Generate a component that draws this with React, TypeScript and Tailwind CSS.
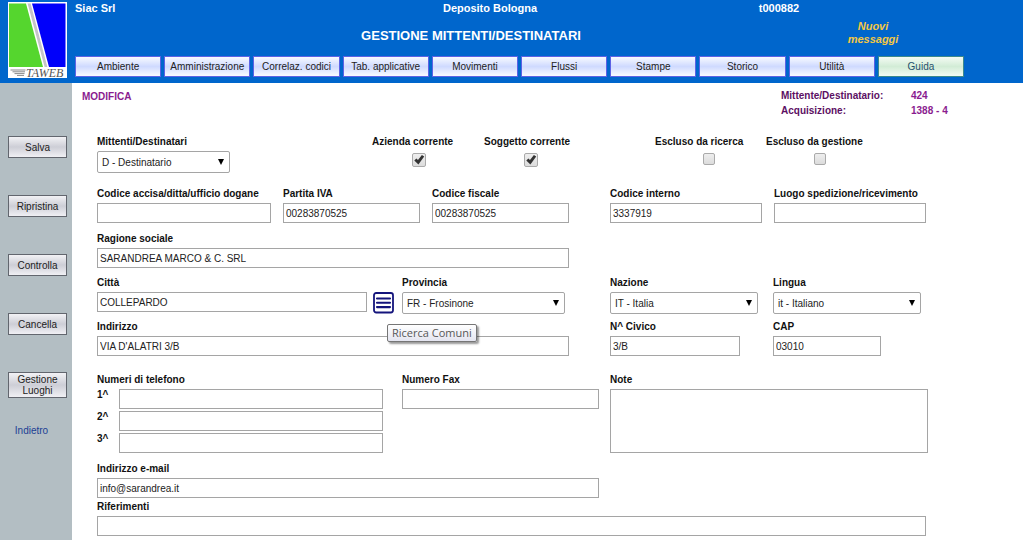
import { useId, type ReactNode } from "react";
import clsx from "clsx";

const menu = [
  "Ambiente",
  "Amministrazione",
  "Correlaz. codici",
  "Tab. applicative",
  "Movimenti",
  "Flussi",
  "Stampe",
  "Storico",
  "Utilità",
  "Guida",
];

const actions = ["Salva", "Ripristina", "Controlla", "Cancella", "Gestione Luoghi"];

const inputClass =
  "block h-5 w-full border border-[#a5a5a5] bg-white px-0.5 text-[10px] text-[#222] outline-none";
const labelClass = "block whitespace-nowrap text-[10px] leading-[18px] font-bold text-[#111]";

function Logo() {
  return (
    <svg viewBox="0 0 59 76" className="mt-0.5 h-[76px] w-[59px] shrink-0" role="img" aria-label="Taweb">
      <rect width="59" height="76" fill="#fff" />
      <path d="M1 1.5H18L35 65H1Z" fill="#55d62e" />
      <path d="M24 1.5H57.5V65H41Z" fill="#0000fa" />
      <path d="M19.6 1.5H22.6L39.4 65H36.6Z" fill="#c4c4c8" />
      <path
        d="M2.5 68H17.5M4.5 69.8H17M6.5 71.6H16.5M9 73.4H16"
        stroke="#8a8a8a"
        strokeWidth="1"
        fill="none"
      />
      <text
        x="18"
        y="74.5"
        fontSize="12"
        fontStyle="italic"
        fontFamily="Liberation Serif, serif"
        fill="#555"
      >
        TAWEB
      </text>
    </svg>
  );
}

function TextField({ label, value = "", after }: { label: string; value?: string; after?: ReactNode }) {
  const id = useId();
  return (
    <div className="min-w-0">
      <label htmlFor={id} className={labelClass}>
        {label}
      </label>
      <div className="flex">
        <input id={id} type="text" defaultValue={value} className={inputClass} />
        {after}
      </div>
    </div>
  );
}

function SelectField({ label, value }: { label: string; value: string }) {
  const id = useId();
  return (
    <div className="min-w-0">
      <label htmlFor={id} className={labelClass}>
        {label}
      </label>
      <div className="relative">
        <select
          id={id}
          className="block h-[22px] w-full appearance-none rounded-xs border border-[#a5a5a5] bg-white px-1 text-[10px] text-[#222] outline-none"
        >
          <option>{value}</option>
        </select>
        <svg viewBox="0 0 6 6" className="pointer-events-none absolute top-2 right-1.5 size-1.5">
          <path d="M0 0H6L3 6Z" fill="#000" />
        </svg>
      </div>
    </div>
  );
}

function CheckField({ label, checked = false }: { label: string; checked?: boolean }) {
  const id = useId();
  return (
    <div className="min-w-0">
      <label htmlFor={id} className={labelClass}>
        {label}
      </label>
      <div className={clsx("grid justify-start pt-0.5", checked ? "pl-10" : "pl-12")}>
        <input
          id={id}
          type="checkbox"
          defaultChecked={checked}
          className={clsx(
            "peer col-start-1 row-start-1 appearance-none rounded-xs border border-[#aaa] bg-linear-to-b from-[#eee] to-[#dcdcdc]",
            checked ? "size-3.5" : "size-3",
          )}
        />
        <svg
          viewBox="0 0 14 14"
          className="pointer-events-none invisible col-start-1 row-start-1 size-3.5 peer-checked:visible"
        >
          <path d="M2.3 7.6 4.4 5.5 6 7.1 9.9 2 12.2 3.6 6.4 11.6Z" fill="#333" />
        </svg>
      </div>
    </div>
  );
}

function SearchTowns() {
  return (
    <div className="relative ml-1.5 shrink-0">
      <button type="button" aria-label="Ricerca Comuni" className="block">
        <svg viewBox="0 0 22 22" className="size-[22px]">
          <rect x="1" y="1" width="19" height="19.5" rx="2.2" fill="#fff" stroke="#14147c" strokeWidth="1.8" />
          <path d="M4 6.5H17M4 10.8H17M4 15.1H17" stroke="#14147c" strokeWidth="2.1" strokeLinecap="round" />
        </svg>
      </button>
      <div
        role="tooltip"
        className="absolute top-8 left-3.5 z-10 rounded-xs border border-[#767676] bg-linear-to-b from-white to-[#e4e5f0] px-1 font-['Open_Sans',sans-serif] text-[11px] leading-4 whitespace-nowrap text-[#575757] shadow-[2px_2px_2px_rgba(0,0,0,0.4)]"
      >
        Ricerca Comuni
      </div>
    </div>
  );
}

export default function App() {
  return (
    <div className="flex min-h-screen flex-col bg-white font-['Liberation_Sans',Arial,sans-serif] text-[10px]">
      <header className="flex h-[83px] gap-2 bg-[#0066cc] pl-2 text-white">
        <Logo />
        <div className="min-w-0 flex-1 pr-[59px]">
          <div className="grid grid-cols-[300fr_230fr_348fr_11fr] text-[11px] leading-4 font-bold">
            <span>Siac Srl</span>
            <span className="text-center">Deposito Bologna</span>
            <span className="text-center">t000882</span>
          </div>
          <div className="mt-1 grid h-9 grid-cols-[85fr_622fr_182fr] font-bold">
            <h1 className="col-start-2 pt-2 text-center text-[13px] leading-4">
              GESTIONE MITTENTI/DESTINATARI
            </h1>
            <a href="#messaggi" className="mx-auto w-14 text-center text-[11px] leading-[13px] text-[#f5c842] italic">
              Nuovi messaggi
            </a>
          </div>
          <nav className="flex gap-[3px]">
            {menu.map((item) => (
              <button
                key={item}
                type="button"
                className={clsx(
                  "h-[21px] min-w-0 flex-1 border text-center whitespace-nowrap",
                  item === "Guida"
                    ? "border-[#3c8a8c] bg-linear-to-b from-[#f4fbf4] via-[#d2ecd6] to-[#f4fcf4] text-[#26506e]"
                    : "border-[#5c62e4] bg-linear-to-b from-[#f8faff] via-[#cfdaff] to-[#f8faff] text-[#222]",
                )}
              >
                {item}
              </button>
            ))}
          </nav>
        </div>
      </header>

      <div className="flex flex-1">
        <aside className="flex w-[72px] shrink-0 flex-col gap-[37px] bg-[#b3bec3] pt-[53px] pr-[5px] pl-2">
          {actions.map((item) => (
            <button
              key={item}
              type="button"
              className="min-h-[22px] border border-[#62666e] bg-linear-to-b from-[#f2f2f5] via-[#cdced6] to-[#f0f0f4] px-1 py-px leading-[11px] text-[#222]"
            >
              {item}
            </button>
          ))}
          <a href="#indietro" className="-mt-3 pr-3 text-center leading-4 text-[#1c3f94]">
            Indietro
          </a>
        </aside>

        <main className="min-w-0 flex-1 pr-[95px] pl-[25px]">
          <div className="-ml-[15px] flex h-[50px] justify-between pt-[5px] font-bold">
            <h2 className="pt-px leading-4 text-[#8a1c8f]">MODIFICA</h2>
            <dl className="grid grid-cols-[130px_17px] content-start text-[#5c0f63]">
              <dt className="leading-[15px]">Mittente/Destinatario:</dt>
              <dd className="leading-[15px] whitespace-nowrap text-[#8a1c8f]">424</dd>
              <dt className="leading-[15px]">Acquisizione:</dt>
              <dd className="leading-[15px] whitespace-nowrap text-[#8a1c8f]">1388 - 4</dd>
            </dl>
          </div>

          <form>
            <div className="mb-3 grid grid-cols-[133fr_142fr_112fr_171fr_111fr_162fr]">
              <SelectField label="Mittenti/Destinatari" value="D - Destinatario" />
              <div />
              <CheckField label="Azienda corrente" checked />
              <CheckField label="Soggetto corrente" checked />
              <CheckField label="Escluso da ricerca" />
              <CheckField label="Escluso da gestione" />
            </div>

            <div className="mb-[7px] grid grid-cols-[174fr_137fr_137fr_17fr_152fr_152fr] gap-x-3 pr-0.5">
              <TextField label="Codice accisa/ditta/ufficio dogane" />
              <TextField label="Partita IVA" value="00283870525" />
              <TextField label="Codice fiscale" value="00283870525" />
              <div />
              <TextField label="Codice interno" value="3337919" />
              <TextField label="Luogo spedizione/ricevimento" />
            </div>

            <div className="mb-1.5 grid grid-cols-[472fr_359fr]">
              <TextField label="Ragione sociale" value="SARANDREA MARCO & C. SRL" />
            </div>

            <div className="mb-1 grid grid-cols-[298fr_7fr_163fr_45fr_148fr_15fr_148fr_7fr]">
              <TextField label="Città" value="COLLEPARDO" after={<SearchTowns />} />
              <div />
              <SelectField label="Provincia" value="FR - Frosinone" />
              <div />
              <SelectField label="Nazione" value="IT - Italia" />
              <div />
              <SelectField label="Lingua" value="it - Italiano" />
            </div>

            <div className="mb-[15px] grid grid-cols-[472fr_41fr_130fr_33fr_108fr_47fr]">
              <TextField label="Indirizzo" value="VIA D'ALATRI 3/B" />
              <div />
              <TextField label="N^ Civico" value="3/B" />
              <div />
              <TextField label="CAP" value="03010" />
            </div>

            <div className="mb-[7px] grid grid-cols-[286fr_19fr_197fr_11fr_318fr]">
              <fieldset className="min-w-0">
                <legend className={labelClass}>Numeri di telefono</legend>
                <div className="flex flex-col gap-0.5">
                  {["1^", "2^", "3^"].map((n) => (
                    <label key={n} className="flex font-bold text-[#111]">
                      <span className="w-[22px] shrink-0 leading-3">{n}</span>
                      <input type="tel" className={inputClass} />
                    </label>
                  ))}
                </div>
              </fieldset>
              <div />
              <TextField label="Numero Fax" />
              <div />
              <div>
                <label htmlFor="note" className={labelClass}>
                  Note
                </label>
                <textarea
                  id="note"
                  className="block h-16 w-full resize-none border border-[#a5a5a5] bg-white p-0.5 outline-none"
                />
              </div>
            </div>

            <div className="grid grid-cols-[502fr_329fr]">
              <TextField label="Indirizzo e-mail" value="info@sarandrea.it" />
            </div>
            <div className="pr-0.5">
              <TextField label="Riferimenti" />
            </div>
          </form>
        </main>
      </div>
    </div>
  );
}
